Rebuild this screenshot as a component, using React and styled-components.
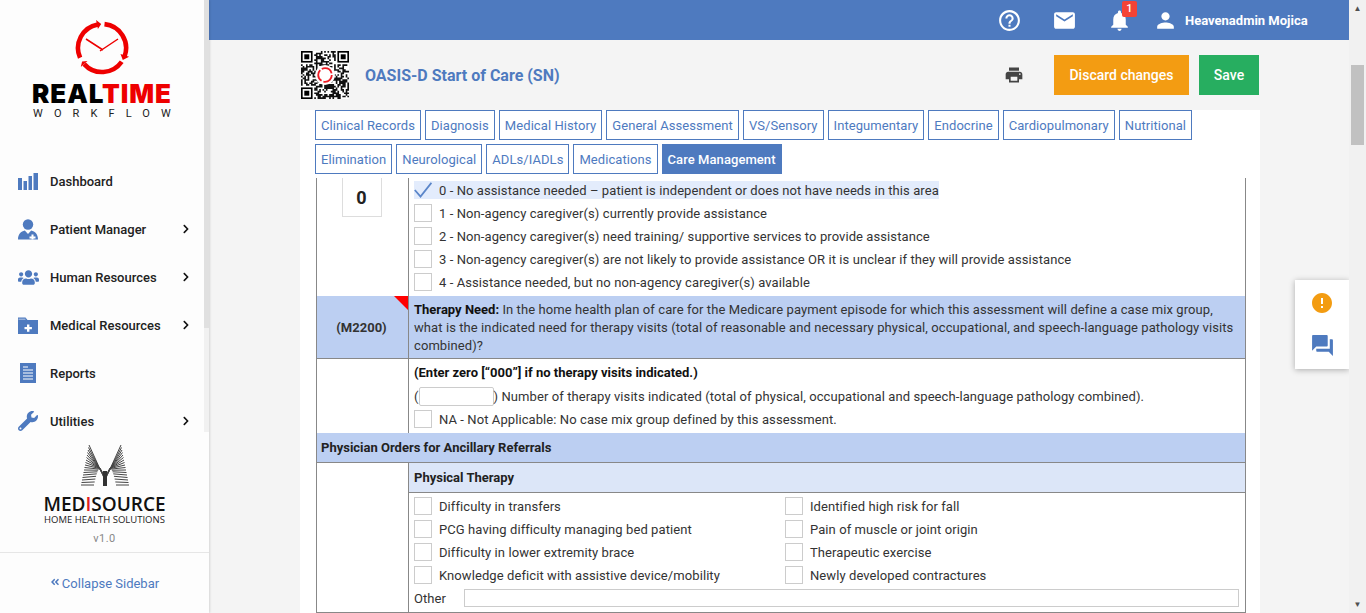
import React from 'react';
import styled, { createGlobalStyle } from 'styled-components';
import { MdHelpOutline, MdEmail, MdNotifications, MdPerson, MdPrint, MdError, MdQuestionAnswer } from 'react-icons/md';
import { FaUsers, FaWrench, FaChevronRight, FaAngleDoubleLeft } from 'react-icons/fa';

const BLUE = '#4e7abf';

const GlobalStyle = createGlobalStyle`
  html, body { margin: 0; height: 100%; overflow: hidden; }
  body { font-family: Roboto, "Liberation Sans", sans-serif; font-size: 13px; color: #333; }
  * { box-sizing: border-box; }
`;

// pseudo random modules for the qr picture
const QR_SIZE = 29;
const buildQr = () => {
  const cells = [];
  let seed = 77;
  const far = QR_SIZE - 8;
  const inFinder = (x, y) =>
    (x < 8 && y < 8) || (x >= far && y < 8) || (x < 8 && y >= far);
  for (let y = 0; y < QR_SIZE; y++) {
    for (let x = 0; x < QR_SIZE; x++) {
      seed = (seed * 1103515245 + 12345) & 0x7fffffff;
      if (!inFinder(x, y) && (seed >> 16) % 100 < 58) cells.push(`M${x} ${y}h1v1h-1z`);
    }
  }
  return cells.join('');
};
const qrPath = buildQr();

const Finder = ({ x, y }) => (
  <g>
    <rect x={x + 0.5} y={y + 0.5} width="6" height="6" fill="none" stroke="#000" />
    <rect x={x + 2} y={y + 2} width="3" height="3" fill="#000" />
  </g>
);

const QrCode = () => (
  <svg width="48" height="48" viewBox={`0 0 ${QR_SIZE} ${QR_SIZE}`}>
    <rect width={QR_SIZE} height={QR_SIZE} fill="#fff" />
    <path d={qrPath} fill="#111" />
    <Finder x={0} y={0} />
    <Finder x={QR_SIZE - 7} y={0} />
    <Finder x={0} y={QR_SIZE - 7} />
    <circle cx="14.5" cy="14.5" r="6" fill="#fff" />
    <circle cx="14.5" cy="14.5" r="4.1" fill="none" stroke="#ee1c25" strokeWidth="1.1" strokeDasharray="7.4 1.2" />
  </svg>
);

const ClockLogo = () => (
  <svg width="56" height="56" viewBox="0 0 56 56">
    <g fill="none" stroke="#ee0000" strokeWidth="4.6">
      <path d="M6.1 37.8 A24 24 0 0 1 23.8 4.4" />
      <path d="M30.5 4.1 A24 24 0 0 1 50.6 36.2" />
      <path d="M47.7 41.8 A24 24 0 0 1 10.2 44.1" />
    </g>
    <path d="M27.2 4 L23.9 8.9 L22.1 0.1 Z M48.8 40 L46.5 34 L55.1 36.8 Z M8.1 41.4 L13.5 41 L6.8 47.1 Z" fill="#ee0000" />
    <path d="M12 19 L29 30 M44 19 L26 31" stroke="#ee0000" strokeWidth="1.5" fill="none" />
  </svg>
);

const fanLines = Array.from({ length: 17 }, (_, i) => {
  const t = i / 16;
  return {
    x1: 8 * t,
    y1: 41 - 40 * t,
    x2: 13 + 11 * t,
    y2: 41 - 5 * t - 14 * Math.sin(Math.PI * t),
  };
});

const MediLogo = () => (
  <svg width="48" height="43" viewBox="0 0 48 43">
    <g stroke="#444" strokeWidth="1">
      {fanLines.map((l, i) => (
        <g key={i}>
          <line x1={l.x1} y1={l.y1} x2={l.x2} y2={l.y2} />
          <line x1={48 - l.x1} y1={l.y1} x2={48 - l.x2} y2={l.y2} />
        </g>
      ))}
    </g>
    <path d="M22 27 L26 27 L26 42 L22 42 Z" fill="#333" />
  </svg>
);

const BarsIcon = () => (
  <svg width="20" height="17" viewBox="0 0 20 17" fill={BLUE}>
    <rect x="0" y="5" width="4" height="12" />
    <rect x="5.5" y="8" width="3.5" height="9" />
    <rect x="10.5" y="3" width="3.5" height="14" />
    <rect x="15.5" y="0" width="4.5" height="17" />
  </svg>
);

const PatientIcon = () => (
  <svg width="20" height="21" viewBox="0 0 20 21" fill={BLUE}>
    <circle cx="10" cy="5.5" r="5.2" />
    <path d="M0 20.5 C0 15 3 12.5 6.8 11.5 L10 15 L13.2 11.5 C17 12.5 20 15 20 20.5 Z" />
    <path d="M13.5 15.5 h2 v2 h2 v2 h-2 v1 h-2 v-1 h-2 v-2 h2 Z" fill="#fff" />
  </svg>
);

const FolderIcon = () => (
  <svg width="20" height="17" viewBox="0 0 20 17" fill={BLUE}>
    <path d="M0 0.5 H7.5 L9.5 3 H20 V17 H0 Z" />
    <path d="M0.5 2.2 H7.5" stroke="#fff" strokeWidth="0.6" />
    <path d="M9 7.5 h2.4 v2.5 h2.5 v2.2 h-2.5 v2.5 h-2.4 v-2.5 h-2.5 v-2.2 h2.5 Z" fill="#fff" />
  </svg>
);

const ReportIcon = () => (
  <svg width="20" height="20" viewBox="0 0 20 20">
    <rect x="2" y="0" width="16" height="20" fill={BLUE} />
    <path d="M5 4 H10 M5 7 H15 M5 10 H15 M5 13 H15 M5 16 H15" stroke="#fff" strokeWidth="1" />
  </svg>
);

const CheckMark = () => (
  <svg width="18" height="18" viewBox="0 0 18 18">
    <path d="M0.8 9 L6.5 15.5 L17.4 1.8" fill="none" stroke="#5b86c9" strokeWidth="1.8" />
  </svg>
);

const navItems = [
  { label: 'Dashboard', icon: <BarsIcon /> },
  { label: 'Patient Manager', icon: <PatientIcon />, more: true },
  { label: 'Human Resources', icon: <FaUsers size={21} />, more: true },
  { label: 'Medical Resources', icon: <FolderIcon />, more: true },
  { label: 'Reports', icon: <ReportIcon /> },
  { label: 'Utilities', icon: <FaWrench size={20} />, more: true },
];

const tabRows = [
  ['Clinical Records', 'Diagnosis', 'Medical History', 'General Assessment', 'VS/Sensory', 'Integumentary', 'Endocrine', 'Cardiopulmonary', 'Nutritional'],
  ['Elimination', 'Neurological', 'ADLs/IADLs', 'Medications', 'Care Management'],
];

const careOptions = [
  '1 - Non-agency caregiver(s) currently provide assistance',
  '2 - Non-agency caregiver(s) need training/ supportive services to provide assistance',
  '3 - Non-agency caregiver(s) are not likely to provide assistance OR it is unclear if they will provide assistance',
  '4 - Assistance needed, but no non-agency caregiver(s) available',
];

const therapyOptions = [
  'Difficulty in transfers',
  'Identified high risk for fall',
  'PCG having difficulty managing bed patient',
  'Pain of muscle or joint origin',
  'Difficulty in lower extremity brace',
  'Therapeutic exercise',
  'Knowledge deficit with assistive device/mobility',
  'Newly developed contractures',
];

const App = () => {
  return (
    <Page>
      <GlobalStyle />
      <Sidebar>
        <SideTop>
          <SideContent>
            <Brand>
              <ClockLogo />
              <BrandName>REAL<span>TIME</span></BrandName>
              <BrandSub>WORKFLOW</BrandSub>
            </Brand>
            {navItems.map((item) => (
              <NavRow key={item.label}>
                <NavIcon>{item.icon}</NavIcon>
                <NavLabel>{item.label}</NavLabel>
                {item.more && <FaChevronRight size={10} color="#111" />}
              </NavRow>
            ))}
          </SideContent>
          <SideTrack><SideThumb /></SideTrack>
        </SideTop>
        <SideBottom>
          <MediLogo />
          <MediName>MED<span>I</span>SOURCE</MediName>
          <MediSub>HOME HEALTH SOLUTIONS</MediSub>
          <Version>v1.0</Version>
        </SideBottom>
        <Collapse><FaAngleDoubleLeft size={10} /> Collapse Sidebar</Collapse>
      </Sidebar>

      <Main>
        <TopBar>
          <TopIcon><MdHelpOutline size={25} /></TopIcon>
          <TopIcon><MdEmail size={25} /></TopIcon>
          <TopIcon>
            <MdNotifications size={25} />
            <Badge>1</Badge>
          </TopIcon>
          <TopIcon tight><MdPerson size={25} /></TopIcon>
          <UserName>Heavenadmin Mojica</UserName>
        </TopBar>
        <Content>
          <Header>
            <QrBox><QrCode /></QrBox>
            <Title>OASIS-D Start of Care (SN)</Title>
            <PrintButton><MdPrint size={20} /></PrintButton>
            <ActionButton color="#f39c12" width="135px">Discard changes</ActionButton>
            <ActionButton color="#27ae60" width="60px">Save</ActionButton>
          </Header>
          <Panel>
            {tabRows.map((row, i) => (
              <TabRow key={i}>
                {row.map((tab) => (
                  <Tab key={tab} active={tab === 'Care Management'}>{tab}</Tab>
                ))}
              </TabRow>
            ))}
            <FormTable>
              <Row>
                <LeftCell>
                  <ScoreBox>0</ScoreBox>
                </LeftCell>
                <RightCell pad="3px 5px 4px">
                  <Option selected>
                    <Check checked><CheckMark /></Check>
                    0 - No assistance needed – patient is independent or does not have needs in this area
                  </Option>
                  {careOptions.map((text) => (
                    <Option key={text}><Check />{text}</Option>
                  ))}
                </RightCell>
              </Row>
              <Row height="63px">
                <LeftCell shaded center>
                  <Corner />
                  <strong>(M2200)</strong>
                </LeftCell>
                <RightCell shaded pad="5px 8px 3px 5px">
                  <Para>
                    <strong>Therapy Need:</strong> In the home health plan of care for the Medicare payment episode for which this assessment will define a case mix group, what is the indicated need for therapy visits (total of reasonable and necessary physical, occupational, and speech-language pathology visits combined)?
                  </Para>
                </RightCell>
              </Row>
              <Row height="74px">
                <LeftCell />
                <RightCell pad="5px 5px 0">
                  <Para><strong>(Enter zero [“000”] if no therapy visits indicated.)</strong></Para>
                  <VisitsLine>(<VisitsInput />) Number of therapy visits indicated (total of physical, occupational and speech-language pathology combined).</VisitsLine>
                  <Option><Check />NA - Not Applicable: No case mix group defined by this assessment.</Option>
                </RightCell>
              </Row>
              <FullRow>Physician Orders for Ancillary Referrals</FullRow>
              <Row height="150px">
                <LeftCell />
                <RightStack>
                  <SubHeader>Physical Therapy</SubHeader>
                  <RightCell pad="4px 5px 0">
                    <TwoCols>
                      {therapyOptions.map((text) => (
                        <Option key={text}><Check />{text}</Option>
                      ))}
                    </TwoCols>
                    <OtherLine>
                      <OtherLabel>Other</OtherLabel>
                      <OtherInput />
                    </OtherLine>
                  </RightCell>
                </RightStack>
              </Row>
            </FormTable>
          </Panel>
        </Content>
        <FloatBox>
          <MdError size={24} color="#f39c12" />
          <MdQuestionAnswer size={25} color={BLUE} />
        </FloatBox>
      </Main>

      <PageScroll>
        <Arrow>▲</Arrow>
        <PageThumb />
        <Arrow>▼</Arrow>
      </PageScroll>
    </Page>
  );
};

export default App;

const Page = styled.div`
  display: flex;
  height: 613px;
  width: 1366px;
  overflow: hidden;
  background: #f4f4f4;
`;

const Sidebar = styled.aside`
  width: 209px;
  flex: none;
  display: flex;
  flex-direction: column;
  background: #fdfdfd;
  box-shadow: 1px 0 2px rgba(0, 0, 0, 0.12);
  z-index: 2;
`;

const SideTop = styled.div`
  display: flex;
  height: 432px;
  overflow: hidden;
`;

const SideContent = styled.div`
  flex: 1;
`;

const SideTrack = styled.div`
  width: 5px;
  background: #f1f1f1;
`;

const SideThumb = styled.div`
  height: 328px;
  background: #e0e0e0;
`;

const Brand = styled.div`
  height: 157px;
  padding-top: 20px;
  display: flex;
  flex-direction: column;
  align-items: center;
`;

const BrandName = styled.div`
  font-family: Inter, "Liberation Sans", sans-serif;
  font-weight: 900;
  font-size: 26px;
  line-height: 20px;
  letter-spacing: 0.9px;
  margin-top: 8px;
  color: #000;
  span { color: #ee0000; }
`;

const BrandSub = styled.div`
  font-size: 11px;
  line-height: 10px;
  letter-spacing: 11.1px;
  margin: 5px -11px 0 0;
  color: #222;
`;

const NavRow = styled.div`
  height: 48px;
  display: flex;
  align-items: center;
  padding: 0 13px 0 18px;
`;

const NavIcon = styled.div`
  width: 32px;
  display: flex;
  color: ${BLUE};
`;

const NavLabel = styled.span`
  flex: 1;
  font-weight: 500;
  color: #222;
`;

const SideBottom = styled.div`
  height: 121px;
  padding-top: 12px;
  display: flex;
  flex-direction: column;
  align-items: center;
  border-bottom: 1px solid #e6e6e6;
`;

const MediName = styled.div`
  font-family: "Open Sans", sans-serif;
  font-weight: 600;
  font-size: 19px;
  line-height: 20px;
  margin-top: 7px;
  color: #111;
  span { color: #e02020; }
`;

const MediSub = styled.div`
  font-family: "Open Sans", sans-serif;
  font-size: 9.5px;
  line-height: 11px;
  color: #222;
`;

const Version = styled.div`
  margin-top: 7px;
  font-size: 11px;
  color: #888;
  letter-spacing: 0.5px;
`;

const Collapse = styled.div`
  flex: 1;
  display: flex;
  align-items: center;
  justify-content: center;
  gap: 2px;
  color: ${BLUE};
  svg { margin-top: -2px; }
`;

const Main = styled.div`
  flex: 1;
  display: flex;
  flex-direction: column;
  position: relative;
  min-width: 0;
`;

const TopBar = styled.div`
  height: 40px;
  flex: none;
  display: flex;
  align-items: center;
  background: ${BLUE};
  color: #fff;
  padding-left: 773px;
`;

const TopIcon = styled.div`
  position: relative;
  display: flex;
  width: 55px;
  justify-content: center;
  margin-left: ${(p) => (p.tight ? '-9px' : '0')};
`;

const Badge = styled.span`
  position: absolute;
  top: -7px;
  right: 10px;
  width: 15px;
  height: 16px;
  border-radius: 2px;
  background: #f44336;
  color: #fff;
  font-size: 11px;
  font-weight: 500;
  line-height: 15px;
  text-align: center;
`;

const UserName = styled.span`
  font-weight: 700;
  margin-left: -8px;
`;

const Content = styled.div`
  flex: 1;
  padding-left: 91px;
  width: 1051px;
`;

const Header = styled.div`
  height: 70px;
  display: flex;
  align-items: center;
  padding-right: 1px;
`;

const QrBox = styled.div`
  display: flex;
  margin: 0 16px 0 1px;
`;

const Title = styled.h1`
  flex: 1;
  margin: 0;
  font-size: 16px;
  font-weight: 700;
  color: ${BLUE};
`;

const PrintButton = styled.div`
  display: flex;
  color: #444;
  margin-right: 20px;
`;

const ActionButton = styled.div`
  width: ${(p) => p.width};
  height: 40px;
  margin-left: 10px;
  display: flex;
  align-items: center;
  justify-content: center;
  background: ${(p) => p.color};
  color: #fff;
  font-size: 14px;
  font-weight: 500;
  &:first-of-type { margin-left: 0; }
`;

const Panel = styled.div`
  width: 960px;
  height: 503px;
  background: #fff;
  padding-left: 15px;
`;

const TabRow = styled.div`
  display: flex;
  gap: 4px;
  margin-bottom: 4px;
`;

const Tab = styled.div`
  height: 30px;
  padding: 0 5px;
  display: flex;
  align-items: center;
  border: 1px solid ${BLUE};
  background: ${(p) => (p.active ? BLUE : '#fff')};
  color: ${(p) => (p.active ? '#fff' : BLUE)};
  font-weight: ${(p) => (p.active ? 500 : 400)};
  letter-spacing: 0.07px;
`;

const FormTable = styled.div`
  width: 930px;
  margin-left: 1px;
  border-left: 1px solid #888;
  border-right: 1px solid #888;
`;

const Row = styled.div`
  display: grid;
  grid-template-columns: 92px 1fr;
  height: ${(p) => p.height || '118px'};
  border-bottom: 1px solid #888;
`;

const LeftCell = styled.div`
  position: relative;
  display: flex;
  flex-direction: column;
  align-items: center;
  justify-content: ${(p) => (p.center ? 'center' : 'flex-start')};
  background: ${(p) => (p.shaded ? '#bccff2' : '#fff')};
  border-right: 1px solid #888;
  padding-right: 2px;
`;

const RightCell = styled.div`
  padding: ${(p) => p.pad};
  background: ${(p) => (p.shaded ? '#bccff2' : '#fff')};
  letter-spacing: 0.085px;
  strong { letter-spacing: 0; }
`;

const RightStack = styled.div`
  display: flex;
  flex-direction: column;
`;

const ScoreBox = styled.div`
  width: 40px;
  height: 39px;
  border: 1px solid #ddd;
  border-top: 0;
  display: flex;
  align-items: center;
  justify-content: center;
  font-size: 18px;
  font-weight: 700;
  color: #222;
`;

const Corner = styled.span`
  position: absolute;
  top: 0;
  right: 0;
  border-top: 14px solid #f00;
  border-left: 14px solid transparent;
`;

const Option = styled.div`
  display: flex;
  align-items: center;
  width: fit-content;
  height: 18px;
  margin-bottom: 5px;
  background: ${(p) => (p.selected ? '#e3ecfc' : 'transparent')};
`;

const Check = styled.span`
  width: 18px;
  height: 18px;
  margin-right: 7px;
  flex: none;
  display: flex;
  align-items: center;
  justify-content: center;
  border: ${(p) => (p.checked ? '0' : '1px solid #ccc')};
  background: ${(p) => (p.checked ? 'transparent' : '#fff')};
`;

const Para = styled.div`
  line-height: 18px;
  color: #333;
  strong { color: #111; }
`;

const VisitsLine = styled.div`
  display: flex;
  align-items: center;
  height: 19px;
  margin: 5px 0 4px;
  white-space: pre-wrap;
`;

const VisitsInput = styled.span`
  width: 75px;
  height: 19px;
  border: 1px solid #ccc;
  border-radius: 2px;
`;

const FullRow = styled.div`
  height: 30px;
  padding-left: 4px;
  display: flex;
  align-items: center;
  background: #bccff2;
  border-bottom: 1px solid #888;
  font-weight: 700;
  color: #222;
`;

const SubHeader = styled.div`
  height: 30px;
  flex: none;
  display: flex;
  align-items: center;
  padding-left: 5px;
  background: #dce6f8;
  border-bottom: 1px solid #888;
  font-weight: 700;
  color: #222;
`;

const TwoCols = styled.div`
  display: grid;
  grid-template-columns: 371px 1fr;
`;

const OtherLine = styled.div`
  display: flex;
  align-items: center;
`;

const OtherLabel = styled.span`
  width: 50px;
`;

const OtherInput = styled.span`
  width: 775px;
  height: 18px;
  border: 1px solid #ccc;
`;

const FloatBox = styled.div`
  position: absolute;
  top: 280px;
  right: 0;
  width: 54px;
  height: 89px;
  display: flex;
  flex-direction: column;
  align-items: center;
  justify-content: center;
  gap: 18px;
  background: #fff;
  box-shadow: 0 1px 6px rgba(0, 0, 0, 0.3);
`;

const PageScroll = styled.div`
  width: 17px;
  flex: none;
  display: flex;
  flex-direction: column;
  align-items: center;
  background: #f1f1f1;
  z-index: 1;
`;

const Arrow = styled.div`
  height: 17px;
  font-size: 8px;
  line-height: 17px;
  color: #505050;
  &:last-child { margin-top: auto; }
`;

const PageThumb = styled.div`
  width: 13px;
  height: 80px;
  margin-top: 48px;
  background: #c1c1c1;
`;
